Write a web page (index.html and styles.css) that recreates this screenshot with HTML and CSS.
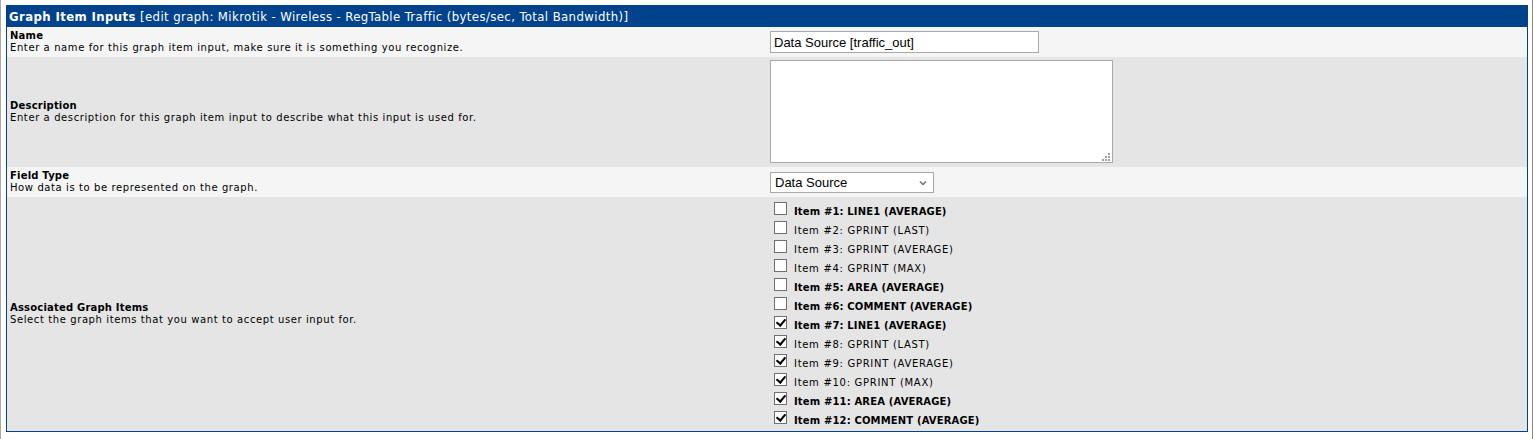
FILE: index.html
```html
<!DOCTYPE html>
<html lang="en">
<head>
    <meta charset="UTF-8">
    <title>Graph Item Inputs</title>
    <link rel="stylesheet" href="styles.css">
</head>
<body>
    <table class="form">
        <tr class="header">
            <td colspan="2"><strong>Graph Item Inputs</strong> [edit graph: Mikrotik - Wireless - RegTable Traffic (bytes/sec, Total Bandwidth)]</td>
        </tr>
        <tr class="row-light">
            <td class="label">
                <b>Name</b><br>
                Enter a name for this graph item input, make sure it is something you recognize.
            </td>
            <td class="field">
                <input type="text" class="text-input" value="Data Source [traffic_out]">
            </td>
        </tr>
        <tr class="row-dark">
            <td class="label">
                <b>Description</b><br>
                Enter a description for this graph item input to describe what this input is used for.
            </td>
            <td class="field">
                <textarea class="text-area"></textarea>
            </td>
        </tr>
        <tr class="row-light">
            <td class="label">
                <b>Field Type</b><br>
                How data is to be represented on the graph.
            </td>
            <td class="field">
                <select class="select-input">
                    <option>Data Source</option>
                </select>
            </td>
        </tr>
        <tr class="row-dark">
            <td class="label">
                <b>Associated Graph Items</b><br>
                Select the graph items that you want to accept user input for.
            </td>
            <td class="field items">
                <label class="item strong"><input type="checkbox">Item #1: LINE1 (AVERAGE)</label>
                <label class="item"><input type="checkbox">Item #2: GPRINT (LAST)</label>
                <label class="item"><input type="checkbox">Item #3: GPRINT (AVERAGE)</label>
                <label class="item"><input type="checkbox">Item #4: GPRINT (MAX)</label>
                <label class="item strong"><input type="checkbox">Item #5: AREA (AVERAGE)</label>
                <label class="item strong"><input type="checkbox">Item #6: COMMENT (AVERAGE)</label>
                <label class="item strong"><input type="checkbox" checked>Item #7: LINE1 (AVERAGE)</label>
                <label class="item"><input type="checkbox" checked>Item #8: GPRINT (LAST)</label>
                <label class="item"><input type="checkbox" checked>Item #9: GPRINT (AVERAGE)</label>
                <label class="item"><input type="checkbox" checked>Item #10: GPRINT (MAX)</label>
                <label class="item strong"><input type="checkbox" checked>Item #11: AREA (AVERAGE)</label>
                <label class="item strong"><input type="checkbox" checked>Item #12: COMMENT (AVERAGE)</label>
            </td>
        </tr>
    </table>
</body>
</html>
```

FILE: styles.css
```css
html, body {
    height: 100%;
}

body {
    margin: 0;
    padding: 5px 4px 0 5px;
    box-sizing: border-box;
    background-color: #fff;
    border-left: 1px solid #a8a8a8;
    border-right: 1px solid #8c8c70;
    font-family: "DejaVu Sans", Verdana, sans-serif;
    font-size: 10px;
    color: #000;
}

.form {
    width: 100%;
    border: 1px solid #00438c;
    border-collapse: collapse;
}

.form td {
    padding: 3px 3px;
    vertical-align: middle;
}

.header td {
    background-color: #00438c;
    color: #fff;
    font-family: "DejaVu Sans Condensed", "DejaVu Sans", sans-serif;
    font-size: 13px;
    letter-spacing: 0.4px;
    height: 15px;
    padding-left: 2px;
}

.row-light td {
    background-color: #f5f5f5;
}

.row-dark td {
    background-color: #e5e5e5;
}

.label {
    width: 50%;
    line-height: 12px;
    letter-spacing: 0.6px;
}

.label b {
    font-weight: bold;
    letter-spacing: 0.2px;
}

.text-input {
    width: 269px;
    height: 22px;
    box-sizing: border-box;
    border: 1px solid #a9a9a9;
    padding: 0 3px;
    margin: 0;
    font-family: "Liberation Sans", Arial, sans-serif;
    font-size: 13px;
    color: #000;
    display: block;
}

.text-area {
    width: 343px;
    height: 103px;
    box-sizing: border-box;
    border: 1px solid #a9a9a9;
    margin: 0 0 1px;
    display: block;
    resize: none;
    background-color: #fff;
    background-image: url("data:image/svg+xml;utf8,<svg xmlns='http://www.w3.org/2000/svg' width='8' height='8'><g fill='%23a0a0a0'><rect x='6' y='0' width='2' height='2'/><rect x='3' y='3' width='2' height='2'/><rect x='6' y='3' width='2' height='2'/><rect x='0' y='6' width='2' height='2'/><rect x='3' y='6' width='2' height='2'/><rect x='6' y='6' width='2' height='2'/></g></svg>");
    background-repeat: no-repeat;
    background-position: right 2px bottom 1px;
}

.select-input {
    appearance: none;
    width: 164px;
    height: 21px;
    box-sizing: border-box;
    border: 1px solid #a9a9a9;
    padding: 0 4px;
    margin: 2px 0 1px;
    display: block;
    font-family: "Liberation Sans", Arial, sans-serif;
    font-size: 13px;
    color: #000;
    background-color: #fff;
    background-image: url("data:image/svg+xml;utf8,<svg xmlns='http://www.w3.org/2000/svg' width='8' height='6'><path d='M1 1.5l3 3 3-3' fill='none' stroke='%23707070' stroke-width='1.5'/></svg>");
    background-repeat: no-repeat;
    background-position: right 6px center;
}

.items {
    padding-top: 5px;
    padding-bottom: 1px;
}

.item {
    display: flex;
    align-items: center;
    height: 19px;
    box-sizing: border-box;
    padding: 4px 0 0 4px;
    letter-spacing: 0.7px;
}

.item.strong {
    font-weight: bold;
    letter-spacing: 0.15px;
}

.item input {
    appearance: none;
    width: 13px;
    height: 13px;
    margin: 0 7px 6px 0;
    border: 1px solid #707070;
    background-color: #fff;
    position: relative;
    flex: none;
}

.item input:checked::after {
    content: "";
    position: absolute;
    left: 3px;
    top: 0px;
    width: 4px;
    height: 7px;
    border-right: 2px solid #000;
    border-bottom: 2px solid #000;
    transform: rotate(40deg);
}
```
